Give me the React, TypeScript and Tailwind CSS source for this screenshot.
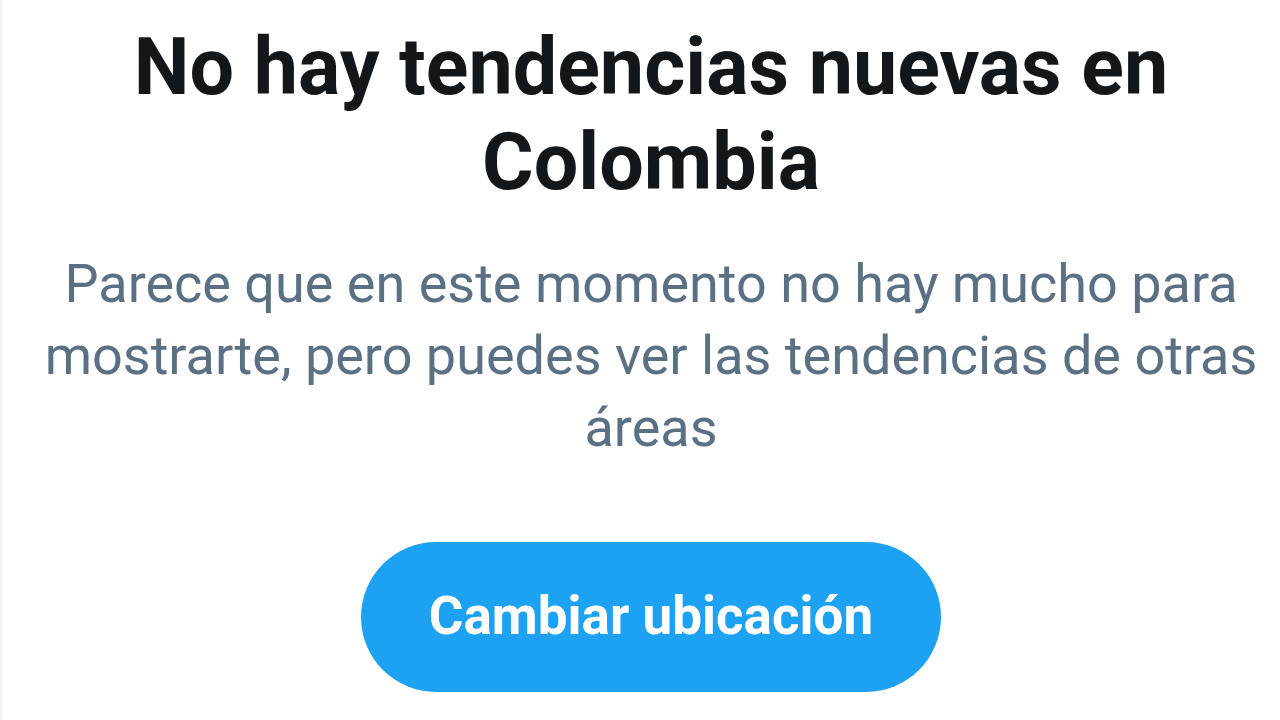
export default function App() {
  return (
    <div
      className="w-[1280px] h-[720px] overflow-hidden bg-white border-l-2 border-[#eef0f2] flex flex-col items-center pl-[20px] pt-[20px] text-center"
      style={{ fontFamily: "Roboto, 'Liberation Sans', sans-serif" }}
    >
      <h1 className="text-[79px] leading-[95px] font-bold text-[#14171a] w-[1100px]">
        No hay tendencias nuevas en Colombia
      </h1>
      <p className="mt-[38px] text-[54px] leading-[72px] text-[#5b7083] w-[1236px]">
        Parece que en este momento no hay mucho para mostrarte, pero puedes ver
        las tendencias de otras áreas
      </p>
      <button className="mt-[78px] w-[580px] h-[150px] shrink-0 rounded-full bg-[#1da1f2] text-white text-[53px] font-bold">
        Cambiar ubicación
      </button>
    </div>
  );
}
